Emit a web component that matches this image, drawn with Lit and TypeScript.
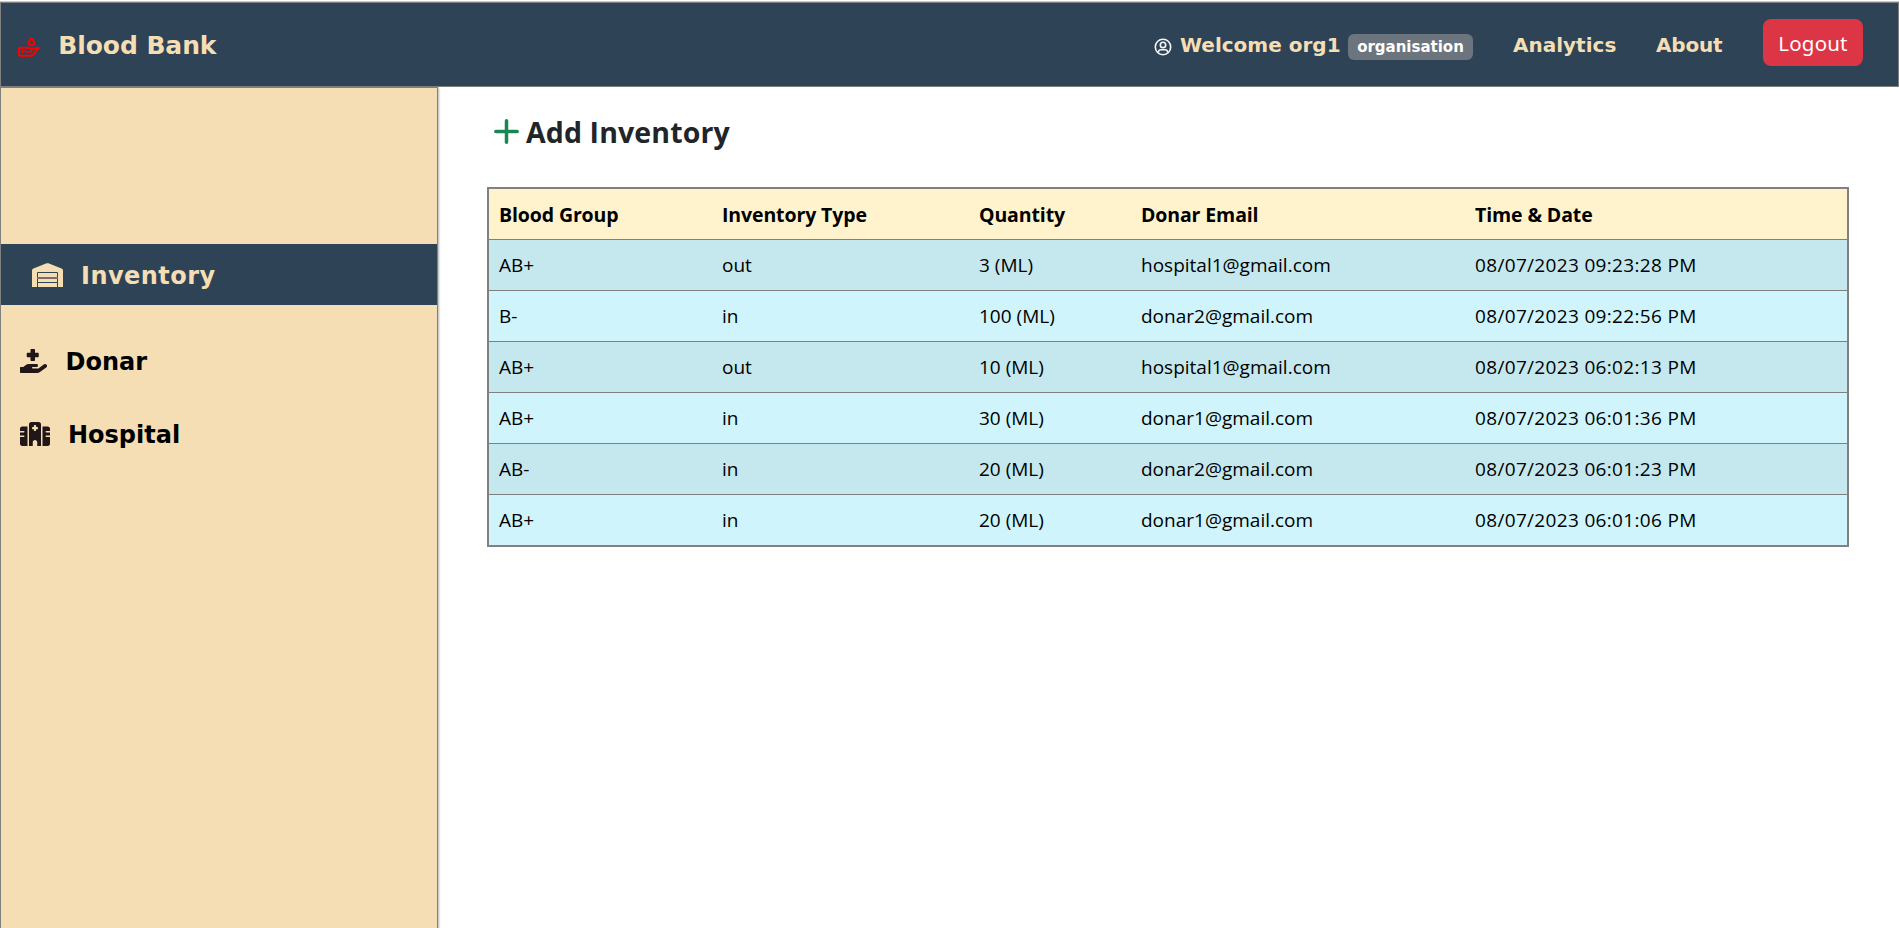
import { LitElement, html, css, svg } from "lit";
import { customElement } from "lit/decorators.js";

const rows = [
  ["AB+", "out", "3 (ML)", "hospital1@gmail.com", "08/07/2023 09:23:28 PM"],
  ["B-", "in", "100 (ML)", "donar2@gmail.com", "08/07/2023 09:22:56 PM"],
  ["AB+", "out", "10 (ML)", "hospital1@gmail.com", "08/07/2023 06:02:13 PM"],
  ["AB+", "in", "30 (ML)", "donar1@gmail.com", "08/07/2023 06:01:36 PM"],
  ["AB-", "in", "20 (ML)", "donar2@gmail.com", "08/07/2023 06:01:23 PM"],
  ["AB+", "in", "20 (ML)", "donar1@gmail.com", "08/07/2023 06:01:06 PM"],
];

const bloodIcon = svg`<svg class="blood-icon" viewBox="0 0 22 20" width="22" height="20" fill="none" stroke="#ff0000" stroke-width="2" stroke-linejoin="round" stroke-linecap="round">
  <path d="M13.400 1.200C12.300 3 10.600 4.300 10.600 5.700a2.800 2.600 0 0 0 5.600 0C16.200 4.300 14.500 3 13.400 1.200Z"/>
  <path d="M1 18.100V11.400Q1 10.700 1.700 10.700H8.600Q10.500 10.700 11.200 11.500H13.400L16.500 11.300Q18.500 10.900 20.800 10.900Q18.500 13 17.300 15.100Q15.300 18.700 12.800 18.800H1.700Q1 18.800 1 18.100Z"/>
  <path stroke-width="1.700" d="M4.200 15.500V14H7.500Q9 15.500 10.800 15H12.800Q14.500 14.500 13.400 12"/></svg>`;

const userIcon = svg`<svg class="user-icon" viewBox="0 0 18 18" width="18" height="18" fill="none" stroke="#f4f6f8" stroke-width="1.600">
  <circle cx="9" cy="9" r="7.700"/><circle cx="9" cy="6.900" r="2.700"/>
  <path d="M4.500 14.500V13.500Q4.900 11.700 6.700 11.700H11.300Q13.100 11.700 13.500 13.500V14.500"/></svg>`;

const warehouseIcon = svg`<svg viewBox="0 0 31 24" width="31" height="24">
  <path fill="#f5deb3" d="M0 24V7.500Q0 6 1.400 5.400L14.600.3Q15.500 0 16.400.3L29.600 5.400Q31 6 31 7.500V24H26V10Q26 9 25 9H6Q5 9 5 10V24Z"/>
  <path fill="#f5deb3" d="M6 10H25V14H6ZM6 16H25V19H6ZM6 20H25V24H6Z"/>
  <path fill="#7c6f66" d="M5 14H26V16H5Z"/></svg>`;

const donarIcon = svg`<svg viewBox="0 0 576 512" width="27" height="24"><path fill="#211719" d="M159.880 175.820h64v64a16 16 0 0 0 16 16h64a16 16 0 0 0 16-16v-64h64a16 16 0 0 0 16-16v-64a16 16 0 0 0-16-16h-64v-64a16 16 0 0 0-16-16h-64a16 16 0 0 0-16 16v64h-64a16 16 0 0 0-16 16v64a16 16 0 0 0 16 16ZM568.070 336.130a39.910 39.910 0 0 0-55.930-8.470L392.470 415.840H271.860a16 16 0 0 1 0-32H350.100c16 0 30.750-10.870 33.370-26.610a32.060 32.060 0 0 0-31.620-37.380h-160a117.700 117.700 0 0 0-74.120 26.250l-46.500 37.740H15.870a16.110 16.110 0 0 0-16 16v96a16.110 16.110 0 0 0 16 16h347a104.800 104.800 0 0 0 62.700-20.800l134-98.900a40 40 0 0 0 8.500-55.910Z"/></svg>`;

const hospitalIcon = svg`<svg viewBox="0 0 640 512" width="30" height="24"><path fill="#211719" d="M192 48c0-26.500 21.500-48 48-48H400c26.500 0 48 21.500 48 48V512H368V432c0-26.500-21.500-48-48-48s-48 21.500-48 48v80H192V48zM48 96H160V512H48c-26.500 0-48-21.500-48-48V320H80c8.800 0 16-7.200 16-16s-7.200-16-16-16H0V224H80c8.800 0 16-7.200 16-16s-7.200-16-16-16H0V144c0-26.500 21.500-48 48-48zm544 0c26.500 0 48 21.500 48 48v48H560c-8.800 0-16 7.200-16 16s7.200 16 16 16h80v64H560c-8.800 0-16 7.200-16 16s7.200 16 16 16h80V464c0 26.500-21.500 48-48 48H480V96H592zM312 64c-8.800 0-16 7.200-16 16v24H272c-8.800 0-16 7.200-16 16v16c0 8.800 7.200 16 16 16h24v24c0 8.800 7.200 16 16 16h16c8.800 0 16-7.200 16-16V152h24c8.800 0 16-7.200 16-16V120c0-8.800-7.200-16-16-16H344V80c0-8.800-7.200-16-16-16H312z"/></svg>`;

const plusIcon = svg`<svg class="plus" viewBox="0 0 25 25" width="25" height="25" stroke="#198754" stroke-width="3.500" stroke-linecap="round"><path d="M12.500 1.800V23.200M1.800 12.500H23.200"/></svg>`;

@customElement("app-root")
export class AppRoot extends LitElement {
  static styles = css`
    :host {
      display: flex;
      flex-direction: column;
      box-sizing: border-box;
      height: 928px;
      padding-top: 1px;
      overflow: hidden;
      background: #fff;
      font-family: "Open Sans", sans-serif;
    }
    * { box-sizing: border-box; }
    svg { display: block; flex: none; }
    .navbar {
      flex: none;
      height: 86px;
      display: flex;
      align-items: flex-start;
      border: 1px solid #808080;
      border-top-width: 2px;
      background: #2e4356;
      color: #f5deb3;
      font: bold 20px/28px "DejaVu Sans", sans-serif;
      white-space: nowrap;
      padding-right: 35px;
    }
    .topline { flex: none; height: 1px; margin-bottom: -1px; background: #c8c8c8; z-index: 1; }
    .blood-icon { margin: 34px 0 0 17px; }
    .brand { margin: 29px auto 0 18.300px; font-size: 25px; line-height: 28px; letter-spacing: -0.080px; }
    .user-icon { margin: 35px 8px 0 0; }
    .welcome { margin-top: 28px; width: 168px; }
    .badge {
      margin: 31px 40px 0 0;
      width: 125px;
      height: 26px;
      border-radius: 6px;
      background: #6c757d;
      color: #fff;
      font-size: 15px;
      line-height: 27px;
      text-align: center;
    }
    .analytics { margin-top: 28px; width: 143px; }
    .about { margin-top: 28px; width: 107px; letter-spacing: -0.200px; }
    .logout {
      margin-top: 16px;
      width: 100px;
      height: 47px;
      padding: 1px 0 0;
      border: 0;
      border-radius: 8px;
      background: #dc3545;
      color: #fff;
      font: 20.500px/46px "Noto Sans", sans-serif;
      letter-spacing: 0.200px;
      text-align: center;
    }
    .body { flex: 1; display: flex; min-height: 0; }
    .sidebar {
      flex: none;
      width: 438px;
      border: 1px solid #808080;
      border-bottom: 0;
      background: #f5deb3;
      box-shadow: 1px 1px 2px rgba(0, 0, 0, 0.300);
      padding-top: 156px;
      color: #000;
      font: bold 24px/30px "DejaVu Sans", sans-serif;
    }
    .item { display: flex; align-items: center; padding-left: 19px; }
    .inventory {
      height: 61px;
      padding-left: 31px;
      background: #2e4356;
      color: #f5deb3;
      letter-spacing: 0.450px;
    }
    .inventory span { margin: 2px 0 0 18px; }
    .donar { margin-top: 41px; height: 30px; }
    .donar span { margin: 1px 0 0 18.500px; }
    .hospital { margin-top: 43px; height: 30px; }
    .hospital span { margin: 2px 0 0 18px; }
    .content { flex: 1; padding: 31px 50px 0 49px; }
    .add { display: flex; align-items: flex-start; height: 69px; padding-left: 7px; }
    .plus { margin-top: 1px; }
    .add h4 {
      margin: -6px 0 0 7px;
      color: #212529;
      font: bold 28.500px/40px "Open Sans", sans-serif;
      letter-spacing: 0.120px;
    }
    table {
      width: 1362px;
      table-layout: fixed;
      border-collapse: separate;
      border-spacing: 0;
      border: 2px solid #808080;
      color: #000;
    }
    th, td { height: 51px; padding: 0 0 0 10px; text-align: left; border-bottom: 1px solid #808080; white-space: nowrap; }
    tr:last-child td { height: 50px; border-bottom: 0; }
    th { background: #fff3cd; font-size: 19.500px; font-weight: 700; letter-spacing: -0.120px; }
    tr th { border-bottom: 1px solid #808080; }
    td { background: #cff4fc; font-size: 19px; }
    tr:nth-child(odd) td { background: #c5e8ef; }
    td:last-child { letter-spacing: 0.330px; }
    .c1 { width: 223px; }
    .c2 { width: 257px; }
    .c3 { width: 162px; }
    .c4 { width: 334px; }
  `;

  render() {
    return html`
      <div class="topline"></div>
      <nav class="navbar">
        ${bloodIcon}
        <span class="brand">Blood Bank</span>
        ${userIcon}
        <span class="welcome">Welcome org1</span>
        <span class="badge">organisation</span>
        <span class="analytics">Analytics</span>
        <span class="about">About</span>
        <button class="logout">Logout</button>
      </nav>
      <div class="body">
        <aside class="sidebar">
          <div class="item inventory">${warehouseIcon}<span>Inventory</span></div>
          <div class="item donar">${donarIcon}<span>Donar</span></div>
          <div class="item hospital">${hospitalIcon}<span>Hospital</span></div>
        </aside>
        <main class="content">
          <div class="add">${plusIcon}<h4>Add Inventory</h4></div>
          <table>
            <colgroup><col class="c1" /><col class="c2" /><col class="c3" /><col class="c4" /><col /></colgroup>
            <thead><tr>
              <th>Blood Group</th><th>Inventory Type</th><th>Quantity</th><th>Donar Email</th><th>Time &amp; Date</th>
            </tr></thead>
            <tbody>${rows.map((r) => html`<tr>${r.map((c) => html`<td>${c}</td>`)}</tr>`)}</tbody>
          </table>
        </main>
      </div>`;
  }
}
